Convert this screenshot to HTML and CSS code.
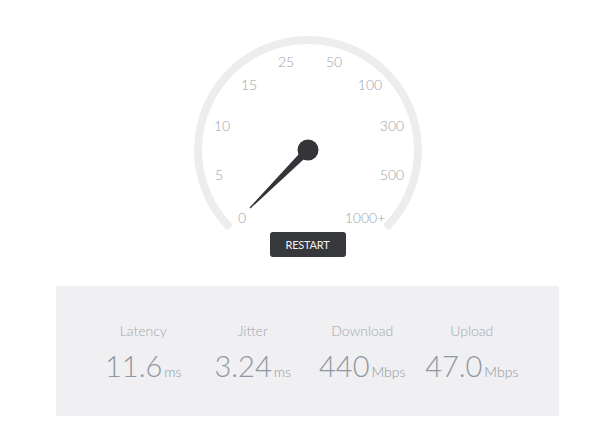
FILE: index.html
```html
<!DOCTYPE html>
<html lang="en">
<head>
	<meta charset="UTF-8">
	<title>Speed test</title>

	<link rel="stylesheet" href="styles.css">
</head>
<body>

	<div class="page">
		<div class="gauge">
			<svg class="dial" width="240" height="197" viewBox="0 0 240 197">
				<path class="track" d="M42.22 192.78 A110 110 0 1 1 197.78 192.78" />
				<text x="54" y="188">0</text>
				<text x="31" y="145">5</text>
				<text x="34" y="96">10</text>
				<text x="61" y="55">15</text>
				<text x="98" y="32">25</text>
				<text x="146" y="32">50</text>
				<text x="182" y="55">100</text>
				<text x="204" y="96">300</text>
				<text x="204" y="145">500</text>
				<text x="177" y="188">1000+</text>
				<g class="needle" transform="translate(120 115) rotate(45)">
					<polygon points="-4,0 4,0 0.6,82 -0.6,82" />
					<circle cx="0" cy="0" r="10.5" />
				</g>
			</svg>
			<button class="restart">RESTART</button>
		</div>

		<div class="results">
			<div class="stat">
				<label>Latency</label>
				<div class="value">11.6<span class="unit">ms</span></div>
			</div>
			<div class="stat">
				<label>Jitter</label>
				<div class="value">3.24<span class="unit">ms</span></div>
			</div>
			<div class="stat">
				<label>Download</label>
				<div class="value">440<span class="unit">Mbps</span></div>
			</div>
			<div class="stat">
				<label>Upload</label>
				<div class="value">47.0<span class="unit">Mbps</span></div>
			</div>
		</div>
	</div>

</body>
</html>
```

FILE: styles.css
```css
body {
	font-family: Lato, "Open Sans", sans-serif;
	background: #fff;
	margin: 0;
}

.page {
	width: 503px;
	margin-left: 56px;
	padding-top: 35px;
}

.gauge {
	display: flex;
	flex-direction: column;
	align-items: center;
}

.dial {
	display: block;
}

.dial .track {
	fill: none;
	stroke: #ededee;
	stroke-width: 8;
}

.dial text {
	font-family: Lato, sans-serif;
	font-weight: 300;
	font-size: 14px;
	fill: #9ba4ad;
	text-anchor: middle;
}

.needle {
	fill: #343539;
}

.restart {
	background: #37383c;
	color: #f2f2f2;
	border: 0px;
	border-radius: 3px;
	width: 76px;
	height: 25px;
	padding: 0;
	font-family: Lato, sans-serif;
	font-size: 11px;
	letter-spacing: -0.2px;
}

.results {
	margin-top: 29px;
	height: 130px;
	background: #f0eff1;
	display: flex;
	justify-content: center;
	align-items: center;
}

.stat {
	width: 109.5px;
	display: flex;
	flex-direction: column;
	align-items: center;
	padding-top: 2px;
}

.stat label {
	color: #a0a8b0;
	font-size: 14px;
	font-weight: 300;
}

.value {
	color: #8e98a2;
	font-size: 29px;
	font-weight: 300;
	white-space: nowrap;
	margin-top: 9px;
}

.unit {
	font-size: 14px;
	margin-left: 2px;
}
```
